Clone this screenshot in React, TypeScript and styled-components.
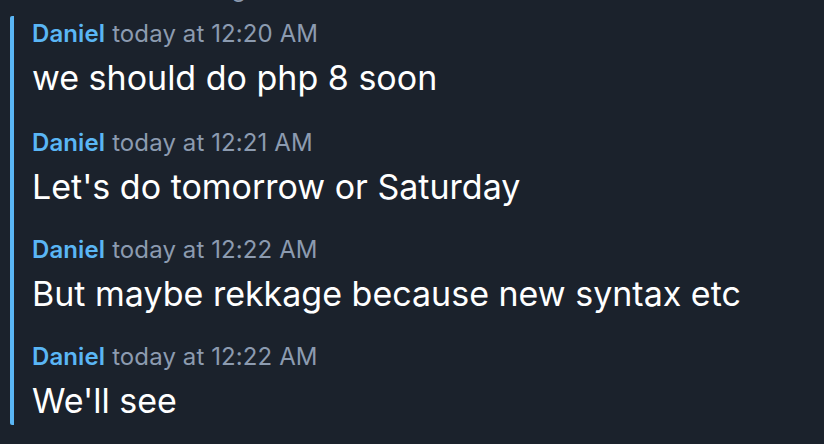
import React from "react";
import styled, { createGlobalStyle } from "styled-components";

const Global = createGlobalStyle`
  html, body { margin: 0; padding: 0; background: #1b222c; }
  body { font-family: Inter, "Noto Sans", sans-serif; -webkit-font-smoothing: antialiased; }
`;

const Page = styled.div`
  width: 824px;
  height: 444px;
  overflow: hidden;
  background: #1b222c;
  display: flex;
  flex-direction: column;
`;

const Clipped = styled.div`
  margin-top: -26px;
  height: 30px;
  padding-left: 32px;
  font-size: 23px;
  line-height: 30px;
  color: #8c9bb0;
  white-space: nowrap;
`;

const Thread = styled.div`
  margin-top: 12px;
  margin-left: 10px;
  display: flex;
  flex-direction: column;
  gap: 19px;
  border-left: 4px solid #5ab6f5;
  border-radius: 2px;
  padding: 3px 0 0 18px;
  height: 409px;
  box-sizing: border-box;
`;

const Message = styled.div`
  display: flex;
  flex-direction: column;
  &:nth-child(2) { margin-top: 2px; }
`;

const Header = styled.div`
  display: flex;
  align-items: baseline;
  gap: 7px;
  font-size: 24px;
  line-height: 30px;
  height: 30px;
  letter-spacing: 0.1px;
`;

const Name = styled.span`
  color: #5ab6f5;
  font-weight: 600;
`;

const Time = styled.span`
  color: #8c9bb0;
`;

const Body = styled.div`
  color: #ffffff;
  font-size: 34px;
  line-height: 58px;
  height: 58px;
  white-space: nowrap;
`;

const messages = [
  { time: "today at 12:20 AM", text: "we should do php 8 soon" },
  { time: "today at 12:21 AM", text: "Let's do tomorrow or Saturday" },
  { time: "today at 12:22 AM", text: "But maybe rekkage because new syntax etc" },
  { time: "today at 12:22 AM", text: "We'll see" },
];

export default function App() {
  return (
    <Page>
      <Global />
      <Clipped>Show older messages</Clipped>
      <Thread>
        {messages.map((m, i) => (
          <Message key={i}>
            <Header>
              <Name>Daniel</Name>
              <Time>{m.time}</Time>
            </Header>
            <Body>{m.text}</Body>
          </Message>
        ))}
      </Thread>
    </Page>
  );
}
